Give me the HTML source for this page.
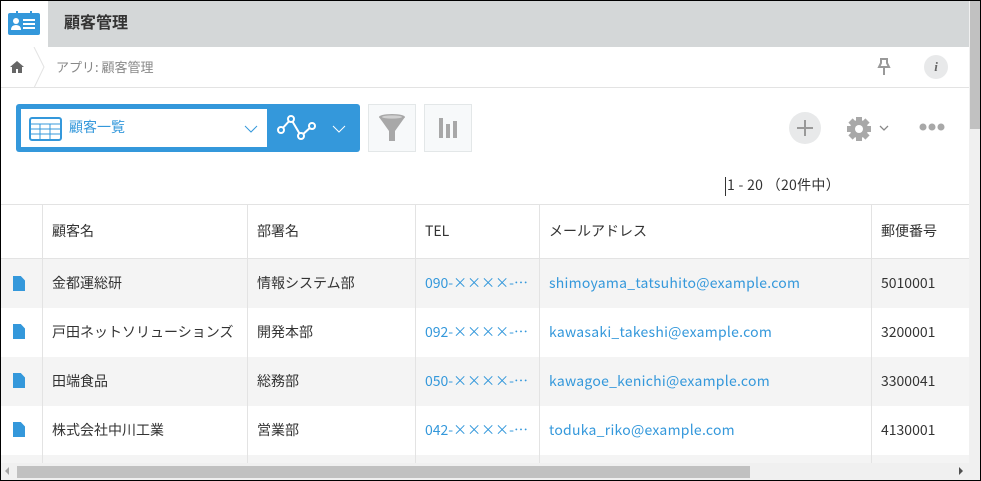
<!DOCTYPE html>
<html><head><meta charset="utf-8"><style>
*{margin:0;padding:0;box-sizing:border-box}
body{width:981px;height:481px;overflow:hidden;background:#fff;font-family:"Noto Sans CJK JP","Liberation Sans",sans-serif;position:relative}
.a{position:absolute}
.frame{position:absolute;left:0;top:0;width:981px;height:481px;border:1px solid #000;pointer-events:none;z-index:10}
.row{position:absolute;left:1px;width:968px;height:49px}
.c{position:absolute;top:0;height:100%;font-size:14px;color:#333;line-height:49px;padding-left:10px;white-space:nowrap;overflow:hidden;text-overflow:ellipsis}
.vl{position:absolute;top:205px;height:258px;width:1px;background:#e3e3e3}
.lk{color:#3498db}
.em{letter-spacing:0.25px}
.doc{position:absolute;left:12px;width:12px;height:15px;background:#3498db;clip-path:polygon(0 0,65% 0,100% 30%,100% 100%,0 100%)}
</style></head><body>
<div class="a" style="left:1px;top:1px;width:47px;height:46px;background:#fff"></div>
<svg class="a" style="left:8px;top:11px" width="32" height="24" viewBox="0 0 32 24"><rect x="0" y="2" width="32" height="22" rx="2" fill="#3498db"/><rect x="8" y="0" width="2" height="4" fill="#3498db"/><rect x="22" y="0" width="2" height="4" fill="#3498db"/><circle cx="8" cy="10" r="3" fill="#fff"/><path d="M3 19q0-5 5-5t5 5z" fill="#fff"/><rect x="15" y="8" width="12" height="2" fill="#fff"/><rect x="15" y="12" width="12" height="2" fill="#fff"/><rect x="15" y="16" width="12" height="2" fill="#fff"/></svg>
<div class="a" style="left:48px;top:1px;width:921px;height:46px;background:#d4d7d8"></div>
<div class="a" style="left:64px;top:9px;font-size:16px;font-weight:bold;color:#333">顧客管理</div>
<svg class="a" style="left:10px;top:60px" width="14" height="14" viewBox="0 0 14 14"><path d="M7 1L0 7h2v6h4V9h2v4h4V7h2z" fill="#666"/></svg>
<svg class="a" style="left:32px;top:47px" width="14" height="41"><path d="M2 0L12 20L2 41" stroke="#e3e3e3" fill="none"/></svg>
<div class="a" style="left:56px;top:57px;font-size:13px;color:#888">アプリ: 顧客管理</div>
<svg class="a" style="left:877px;top:58px" width="14" height="18"><path d="M3 1h8M4 1v4l-2 4h10l-2-4V1M7 9v8" stroke="#999" stroke-width="2" fill="none"/></svg>
<div class="a" style="left:924px;top:55px;width:24px;height:24px;border-radius:50%;background:#e8e9ea;color:#666;font:italic bold 13px 'Liberation Serif',serif;text-align:center;line-height:24px">i</div>
<div class="a" style="left:1px;top:87px;width:968px;height:1px;background:#e3e3e3"></div>
<div class="a" style="left:16px;top:104px;width:344px;height:48px;background:#3498db;border-radius:3px"></div>
<div class="a" style="left:21px;top:109px;width:246px;height:38px;background:#fff"></div>
<svg class="a" style="left:29px;top:117px" width="33" height="24"><rect x="1" y="1" width="31" height="22" rx="2" fill="none" stroke="#3498db" stroke-width="2"/><path d="M1 7h31M1 12h31M1 17h31M11 7v16M21 7v16" stroke="#3498db"/></svg>
<div class="a" style="left:69px;top:117px;font-size:14px;color:#3498db">顧客一覧</div>
<svg class="a" style="left:244px;top:124px" width="14" height="10"><path d="M1 2l6 6 6-6" stroke="#3498db" fill="none"/></svg>
<svg class="a" style="left:276px;top:114px" width="44" height="30"><path d="M5 16L15 5L25 22L36 12" stroke="#fff" stroke-width="2" fill="none"/><g fill="#3498db" stroke="#fff" stroke-width="2"><circle cx="5" cy="16" r="3"/><circle cx="15" cy="5" r="3"/><circle cx="25" cy="22" r="3"/><circle cx="36" cy="12" r="3"/></g></svg>
<svg class="a" style="left:332px;top:124px" width="14" height="10"><path d="M1 2l6 6 6-6" stroke="#fff" fill="none"/></svg>
<div class="a" style="left:368px;top:104px;width:48px;height:48px;background:#f7f9fa;border:1px solid #e3e7e8"></div>
<svg class="a" style="left:377px;top:113px" width="30" height="30"><ellipse cx="15" cy="4" rx="13" ry="3" fill="#a8a8a8"/><path d="M2 4h26L18 18v10h-6V18z" fill="#a8a8a8"/><ellipse cx="15" cy="4" rx="10" ry="1.6" fill="#d0d0d0"/></svg>
<div class="a" style="left:424px;top:104px;width:48px;height:48px;background:#f7f9fa;border:1px solid #e3e7e8"></div>
<svg class="a" style="left:436px;top:116px" width="24" height="24"><rect x="3" y="2" width="4" height="20" fill="#a8a8a8"/><rect x="10" y="8" width="4" height="14" fill="#a8a8a8"/><rect x="17" y="5" width="4" height="17" fill="#a8a8a8"/></svg>
<div class="a" style="left:789px;top:112px;width:32px;height:32px;border-radius:50%;background:#e8e9ea"></div>
<svg class="a" style="left:795px;top:118px" width="20" height="20"><path d="M10 2v16M2 10h16" stroke="#999" stroke-width="2"/></svg>
<svg class="a" style="left:846px;top:116px" width="26" height="26" viewBox="0 0 26 26"><g fill="#a8a8a8"><circle cx="13" cy="13" r="9"/><rect x="10" y="1" width="6" height="24"/><rect x="1" y="10" width="24" height="6"/><rect x="10" y="1" width="6" height="24" transform="rotate(45 13 13)"/><rect x="10" y="1" width="6" height="24" transform="rotate(-45 13 13)"/></g><circle cx="13" cy="13" r="4" fill="#fff"/></svg>
<svg class="a" style="left:879px;top:125px" width="10" height="7"><path d="M1 1l4 4 4-4" stroke="#888" fill="none" stroke-width="1.3"/></svg>
<svg class="a" style="left:919px;top:123px" width="26" height="8"><g fill="#a8a8a8"><circle cx="4" cy="4" r="3.5"/><circle cx="13" cy="4" r="3.5"/><circle cx="22" cy="4" r="3.5"/></g></svg>
<div class="a" style="left:725px;top:177px;width:1px;height:19px;background:#333"></div>
<div class="a" style="left:727px;top:175px;font-size:14px;color:#333;letter-spacing:0.3px">1 - 20 （20件中）</div>
<div class="a" style="left:1px;top:204px;width:968px;height:1px;background:#e3e3e3"></div>
<div class="row" style="top:205px;height:53px;background:#fff">
<div class="c" style="left:41px;line-height:53px">顧客名</div><div class="c" style="left:246px;line-height:53px">部署名</div><div class="c" style="left:414px;line-height:53px">TEL</div><div class="c" style="left:538px;line-height:53px">メールアドレス</div><div class="c" style="left:870px;line-height:53px">郵便番号</div></div>
<div class="a" style="left:1px;top:258px;width:968px;height:1px;background:#e3e3e3"></div>
<div class="row" style="top:259px;background:#f4f4f4"><div class="doc" style="top:17px"></div>
<div class="c" style="left:41px">金都運総研</div><div class="c" style="left:246px">情報システム部</div><div class="c lk" style="left:414px;width:117px">090-××××-××××</div><div class="c lk em" style="left:538px">shimoyama_tatsuhito@example.com</div><div class="c" style="left:870px">5010001</div></div>
<div class="row" style="top:308px;background:#fff"><div class="doc" style="top:16px"></div>
<div class="c" style="left:41px">戸田ネットソリューションズ</div><div class="c" style="left:246px">開発本部</div><div class="c lk" style="left:414px;width:117px">092-××××-××××</div><div class="c lk em" style="left:538px">kawasaki_takeshi@example.com</div><div class="c" style="left:870px">3200001</div></div>
<div class="row" style="top:357px;background:#f4f4f4"><div class="doc" style="top:16px"></div>
<div class="c" style="left:41px">田端食品</div><div class="c" style="left:246px">総務部</div><div class="c lk" style="left:414px;width:117px">050-××××-××××</div><div class="c lk em" style="left:538px">kawagoe_kenichi@example.com</div><div class="c" style="left:870px">3300041</div></div>
<div class="row" style="top:406px;background:#fff"><div class="doc" style="top:16px"></div>
<div class="c" style="left:41px">株式会社中川工業</div><div class="c" style="left:246px">営業部</div><div class="c lk" style="left:414px;width:117px">042-××××-××××</div><div class="c lk em" style="left:538px">toduka_riko@example.com</div><div class="c" style="left:870px">4130001</div></div>
<div class="row" style="top:455px;height:8px;background:#f4f4f4"></div>
<div class="vl" style="left:42px"></div><div class="vl" style="left:247px"></div><div class="vl" style="left:415px"></div><div class="vl" style="left:539px"></div><div class="vl" style="left:871px"></div>
<div class="a" style="left:969px;top:1px;width:11px;height:479px;background:#f0f0f0"></div>
<div class="a" style="left:970px;top:1px;width:10px;height:128px;background:#c1c1c1"></div>
<div class="a" style="left:1px;top:463px;width:968px;height:17px;background:#f0f0f0"></div>
<div class="a" style="left:17px;top:466px;width:733px;height:12px;background:#c1c1c1"></div>
<div class="a" style="left:5px;top:467px;width:0;height:0;border:4px solid transparent;border-right-color:#a3a3a3;border-left:0"></div>
<div class="a" style="left:959px;top:467px;width:0;height:0;border:4px solid transparent;border-left-color:#505050;border-right:0"></div>
<div class="frame"></div>
</body></html>
